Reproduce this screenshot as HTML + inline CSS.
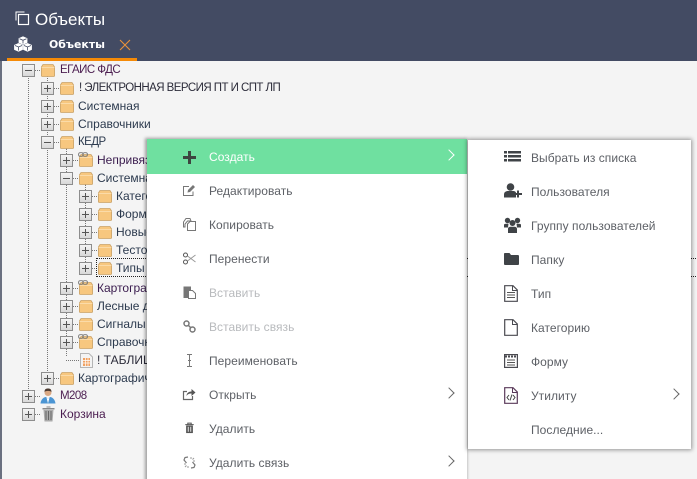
<!DOCTYPE html>
<html lang="ru"><head><meta charset="utf-8"><title>Объекты</title>
<style>
html,body{margin:0;padding:0;width:697px;height:479px;overflow:hidden}
body{font-family:"Liberation Sans",sans-serif}
#w{position:absolute;left:0;top:0;width:697px;height:479px;overflow:hidden;background:#f4f4f4}
#h{position:absolute;left:0;top:0;width:697px;height:61px;background:#434b63}
#lb{position:absolute;left:0;top:61px;width:2px;height:418px;background:#6a7080}
#ul{position:absolute;left:7px;top:58px;width:130px;height:3px;background:#f58a07}
.t{position:absolute;white-space:nowrap}
.tr{line-height:18px;height:18px;color:#2c3a4e;font-family:"Liberation Sans",sans-serif;font-size:12px;margin-top:-1px}
.up{font-size:11.5px;letter-spacing:-.55px}
.b{position:absolute;width:11px;height:11px;border:1px solid #8d8d8d;background:linear-gradient(#f4f4f4,#d8d8d8)}
.b:before{content:"";position:absolute;left:2px;top:5px;width:7px;height:1px;background:#555}
.p:after{content:"";position:absolute;left:5px;top:2px;width:1px;height:7px;background:#555}
.dv{position:absolute;width:0;border-left:1px dotted #777}
.dh{position:absolute;height:0;width:5px;border-top:1px dotted #777}
svg{position:absolute;overflow:visible}
#m1{position:absolute;left:147px;top:139px;width:320px;height:345px;background:#fff;box-shadow:-1px 0 3px 1px rgba(0,0,0,.35)}
#gr{position:absolute;left:0;top:0;width:320px;height:35px;background:#6fe0a0}
#m2{position:absolute;left:468px;top:140px;width:223px;height:309px;background:#fff;box-shadow:0 0 4px 1px rgba(0,0,0,.4)}
.mi{font-size:12px;line-height:16px;height:16px;color:#5d6066;letter-spacing:.05px}
.dis{color:#b8babd}
.ch{position:absolute;width:7px;height:7px;border-top:1px solid #666;border-right:1px solid #666;transform:rotate(45deg)}
</style></head><body><div id="w">
<svg width="0" height="0" style="position:absolute">
<defs>
<symbol id="f" viewBox="0 0 14 14"><path d="M.4 4 L2 1.5 H12 L13.6 4 V12.5 Q13.6 13.5 12.6 13.5 H1.4 Q.4 13.5 .4 12.5Z" fill="#f7c77f" stroke="#c9a36a" stroke-width=".8"/><path d="M.6 4.5 H13.4" stroke="#fbdba8" stroke-width="1"/></symbol>
<symbol id="l" viewBox="0 0 14 6"><path d="M3 .5 H5.5 Q7 .5 7 3 Q7 5.5 5 5.5 H3 Q.8 5.5 .8 3 Q.8 .5 3 .5Z M9 .5 H11 Q13.2 .5 13.2 3 Q13.2 5.5 11 5.5 H9 Q7 5.5 7 3 Q7 .5 9 .5Z" fill="none" stroke="#777" stroke-width="1.3"/></symbol>
</defs></svg>
<div id="h"></div><div id="lb"></div><div id="ul"></div>
<svg style="left:15px;top:11px" width="15" height="15" viewBox="0 0 15 15"><path d="M1 9.5V1H9.5" fill="none" stroke="#fff" stroke-width="1"/><rect x="3.5" y="3.5" width="10" height="10" fill="none" stroke="#fff" stroke-width="1.2"/></svg>
<div class="t" style="left:35px;top:9px;font-size:17px;line-height:22px;color:#fff">Объекты</div>
<svg style="left:14px;top:36px" width="18" height="16" viewBox="0 0 18 16"><g fill="#fff" stroke="#fff" stroke-width=".8" stroke-linejoin="round"><path d="M9 .8 13 2.5V6.5L9 8.3 5 6.5V2.5Z"/><path d="M4.5 7.5 8.5 9.2V13.5L4.5 15.3 .5 13.5V9.2Z"/><path d="M13.5 7.5 17.5 9.2V13.5L13.5 15.3 9.5 13.5V9.2Z"/></g><path d="M5.5 2.8 9 4.3 12.5 2.8M9 4.3V7.5M1 9.5 4.5 11 8 9.5M4.5 11V14.5M10 9.5 13.5 11 17 9.5M13.5 11V14.5" fill="none" stroke="#434b63" stroke-width=".8"/></svg>
<div class="t" style="left:49px;top:37px;line-height:16px;font-weight:bold;color:#fff;font-family:'DejaVu Sans',sans-serif;font-size:10.9px">Объекты</div>
<svg style="left:119px;top:39px" width="12" height="12" viewBox="0 0 12 12"><path d="M1 1 11 11M11 1 1 11" stroke="#e8923a" stroke-width="1.1"/></svg>

<div class="dv" style="left:28px;top:76px;height:315px"></div>
<div class="dv" style="left:47px;top:76px;height:297px"></div>
<div class="dv" style="left:66px;top:148px;height:208px"></div>
<div class="dv" style="left:85px;top:184px;height:78px"></div>
<div class="dh" style="left:35px;top:70px"></div><div class="dh" style="left:54px;top:88px"></div><div class="dh" style="left:54px;top:106px"></div><div class="dh" style="left:54px;top:124px"></div><div class="dh" style="left:54px;top:142px"></div><div class="dh" style="left:73px;top:160px"></div><div class="dh" style="left:73px;top:178px"></div><div class="dh" style="left:92px;top:196px"></div><div class="dh" style="left:92px;top:214px"></div><div class="dh" style="left:92px;top:232px"></div><div class="dh" style="left:92px;top:250px"></div><div class="dh" style="left:92px;top:268px"></div><div class="dh" style="left:73px;top:288px"></div><div class="dh" style="left:73px;top:306px"></div><div class="dh" style="left:73px;top:324px"></div><div class="dh" style="left:73px;top:342px"></div><div class="dh" style="left:66px;top:360px;width:13px"></div><div class="dh" style="left:54px;top:378px"></div><div class="dh" style="left:35px;top:396px"></div><div class="dh" style="left:35px;top:414px"></div>

<div class="b" style="left:22px;top:64px"></div>
<div class="b p" style="left:41px;top:82px"></div>
<div class="b p" style="left:41px;top:100px"></div>
<div class="b p" style="left:41px;top:118px"></div>
<div class="b" style="left:41px;top:136px"></div>
<div class="b p" style="left:60px;top:154px"></div>
<div class="b" style="left:60px;top:172px"></div>
<div class="b p" style="left:79px;top:190px"></div>
<div class="b p" style="left:79px;top:208px"></div>
<div class="b p" style="left:79px;top:226px"></div>
<div class="b p" style="left:79px;top:244px"></div>
<div class="b p" style="left:79px;top:262px"></div>
<div class="b p" style="left:60px;top:282px"></div>
<div class="b p" style="left:60px;top:300px"></div>
<div class="b p" style="left:60px;top:318px"></div>
<div class="b p" style="left:60px;top:336px"></div>
<div class="b p" style="left:41px;top:372px"></div>
<div class="b p" style="left:22px;top:390px"></div>
<div class="b p" style="left:22px;top:408px"></div>

<svg style="left:41px;top:63px" width="14" height="14"><use href="#f"/></svg>
<svg style="left:60px;top:81px" width="14" height="14"><use href="#f"/></svg>
<svg style="left:60px;top:99px" width="14" height="14"><use href="#f"/></svg>
<svg style="left:60px;top:117px" width="14" height="14"><use href="#f"/></svg>
<svg style="left:60px;top:135px" width="14" height="14"><use href="#f"/></svg>
<svg style="left:79px;top:153px" width="14" height="14"><use href="#f"/></svg>
<svg style="left:78px;top:152px" width="10" height="5"><use href="#l" width="10" height="5"/></svg>
<svg style="left:79px;top:171px" width="14" height="14"><use href="#f"/></svg>
<svg style="left:98px;top:189px" width="14" height="14"><use href="#f"/></svg>
<svg style="left:98px;top:207px" width="14" height="14"><use href="#f"/></svg>
<svg style="left:98px;top:225px" width="14" height="14"><use href="#f"/></svg>
<svg style="left:98px;top:243px" width="14" height="14"><use href="#f"/></svg>
<svg style="left:98px;top:261px" width="14" height="14"><use href="#f"/></svg>
<svg style="left:79px;top:281px" width="14" height="14"><use href="#f"/></svg>
<svg style="left:78px;top:280px" width="10" height="5"><use href="#l" width="10" height="5"/></svg>
<svg style="left:79px;top:299px" width="14" height="14"><use href="#f"/></svg>
<svg style="left:79px;top:317px" width="14" height="14"><use href="#f"/></svg>
<svg style="left:79px;top:335px" width="14" height="14"><use href="#f"/></svg>
<svg style="left:78px;top:334px" width="10" height="5"><use href="#l" width="10" height="5"/></svg>
<svg style="left:80px;top:353px" width="13" height="15" viewBox="0 0 13 15"><path d="M.5.5H9L12.5 4V14.5H.5Z" fill="#f3f3f3" stroke="#b5b5b5"/><rect x="3" y="5" width="7" height="8" fill="#f0a060"/><path d="M3 7.5H10M3 10H10M5.5 5V13M8 5V13" stroke="#fff" stroke-width=".7"/></svg>
<svg style="left:60px;top:371px" width="14" height="14"><use href="#f"/></svg>
<svg style="left:40px;top:388px" width="16" height="16" viewBox="0 0 16 16"><circle cx="8" cy="4.5" r="3.5" fill="#d9a883"/><path d="M4.5 4C4.5 1 6 .5 8 .5S11.5 1 11.5 4C10 2.5 6 2.5 4.5 4Z" fill="#4b3a30"/><path d="M.5 15.5C1 11 4 9 6 9L8 11 10 9C12 9 15 11 15.5 15.5Z" fill="#4b95d3"/><path d="M6.5 9.5 8 15.5 9.5 9.5 8 11Z" fill="#fff"/></svg>
<svg style="left:42px;top:406px" width="13" height="16" viewBox="0 0 13 16"><path d="M4.5 1.5H8.5V.5H4.5ZM.5 2H12.5V3.5H.5Z" fill="#888"/><path d="M1.5 4H11.5L10.5 15.5H2.5Z" fill="#aaa"/><path d="M4 5V14M6.5 5V14M9 5V14" stroke="#666" stroke-width="1"/></svg>

<div class="t tr up" style="left:60px;top:62px;color:#4b1d50">ЕГАИС ФДС</div>
<div class="t tr up" style="left:79px;top:80px;color:#2c2c3a">! ЭЛЕКТРОННАЯ ВЕРСИЯ ПТ И СПТ ЛП</div>
<div class="t tr" style="left:78px;top:98px">Системная</div>
<div class="t tr" style="left:78px;top:116px">Справочники</div>
<div class="t tr up" style="left:78px;top:134px">КЕДР</div>
<div class="t tr" style="left:97px;top:152px;color:#3a1c4e">Непривязанные</div>
<div class="t tr" style="left:97px;top:170px">Системная</div>
<div class="t tr" style="left:116px;top:188px">Категории</div>
<div class="t tr" style="left:116px;top:206px">Формы</div>
<div class="t tr" style="left:116px;top:224px">Новые</div>
<div class="t tr" style="left:116px;top:242px">Тестовые</div>
<div class="t tr" style="left:116px;top:260px">Типы</div>
<div style="position:absolute;left:96px;top:258px;width:600px;height:17px;border:1px dotted #222"></div>
<div class="t tr" style="left:97px;top:280px;color:#3a1c4e">Картография</div>
<div class="t tr" style="left:97px;top:298px">Лесные дачи</div>
<div class="t tr" style="left:97px;top:316px">Сигналы</div>
<div class="t tr" style="left:97px;top:334px">Справочники</div>
<div class="t tr" style="left:97px;top:352px;color:#2c2c3a">! ТАБЛИЦА</div>
<div class="t tr" style="left:78px;top:370px">Картографические</div>
<div class="t tr up" style="left:60px;top:388px;color:#4b1d50">М208</div>
<div class="t tr" style="left:60px;top:406px;color:#4b1d50">Корзина</div>

<div id="m1"><div id="gr"></div></div>
<svg style="left:183px;top:151px" width="13" height="13" viewBox="0 0 13 13"><path d="M5 0H8V5H13V8H8V13H5V8H0V5H5Z" fill="#3d4540"/></svg>
<div class="t mi" style="left:209px;top:149px;color:#fff">Создать</div>
<div class="ch" style="left:445px;top:151px;border-color:#fff"></div>
<svg style="left:183px;top:184px" width="13" height="13" viewBox="0 0 13 13"><path d="M10 7.5V11.5H.5V2.5H6" fill="none" stroke="#777" stroke-width="1"/><path d="M4.5 8.5 5 6 10 1 12 3 7 8Z" fill="#777"/></svg>
<div class="t mi" style="left:209px;top:183px">Редактировать</div>
<svg style="left:183px;top:218px" width="13" height="13" viewBox="0 0 13 13"><path d="M3 .5H7L8 3H4.5L2 6V9H.5V4Z" fill="none" stroke="#777"/><path d="M7 3.5H12.5V12.5H4.5V6Z" fill="none" stroke="#777"/></svg>
<div class="t mi" style="left:209px;top:217px">Копировать</div>
<svg style="left:183px;top:252px" width="13" height="13" viewBox="0 0 13 13"><circle cx="2.5" cy="3" r="2" fill="none" stroke="#555"/><circle cx="2.5" cy="10" r="2" fill="none" stroke="#555"/><path d="M4.5 4 12.5 10M4.5 9 12.5 3" stroke="#999"/></svg>
<div class="t mi" style="left:209px;top:251px">Перенести</div>
<svg style="left:183px;top:286px" width="13" height="13" viewBox="0 0 13 13"><path d="M.5 .5H8V4H5V12H.5Z" fill="#777"/><path d="M5.5 4.5H9.5L12.5 7.5V12.5H5.5Z" fill="#fff" stroke="#777"/></svg>
<div class="t mi dis" style="left:209px;top:285px">Вставить</div>
<svg style="left:183px;top:320px" width="13" height="13" viewBox="0 0 13 13"><circle cx="3.5" cy="3.5" r="2.5" fill="none" stroke="#777" stroke-width="1.5"/><circle cx="9.5" cy="9.5" r="2.5" fill="none" stroke="#777" stroke-width="1.5"/><path d="M5 5 8 8" stroke="#777" stroke-width="1.5"/></svg>
<div class="t mi dis" style="left:209px;top:319px">Вставить связь</div>
<svg style="left:183px;top:354px" width="13" height="13" viewBox="0 0 13 13"><path d="M4 .5H6L6.5 1 7 .5H9M4 12.5H6L6.5 12 7 12.5H9M6.5 1V12M5 6.5H8" fill="none" stroke="#777"/></svg>
<div class="t mi" style="left:209px;top:353px">Переименовать</div>
<svg style="left:183px;top:388px" width="13" height="13" viewBox="0 0 13 13"><path d="M9.5 8V11.5H.5V3.5H4" fill="none" stroke="#666" stroke-width="1.2"/><path d="M3.5 8C3.5 5 6 3.5 8.5 3.5V1L12.5 4.5 8.5 8V5.5C6.5 5.5 4.5 6 3.5 8Z" fill="#555"/></svg>
<div class="t mi" style="left:209px;top:387px">Открыть</div>
<div class="ch" style="left:445px;top:389px"></div>
<svg style="left:184px;top:422px" width="11" height="12" viewBox="0 0 13 13"><path d="M4.5 2V.8H8.5V2M1.5 2.5H11.5" fill="none" stroke="#555" stroke-width="1.2"/><path d="M2.5 3.5H10.5V12.5H2.5Z" fill="#555"/><path d="M5 5V11M8 5V11" stroke="#fff"/></svg>
<div class="t mi" style="left:209px;top:421px">Удалить</div>
<svg style="left:183px;top:456px" width="13" height="13" viewBox="0 0 13 13"><path d="M5 1 2 1.5 1 4 3.5 7M8 12 11 11.5 12 9 9.5 6" fill="none" stroke="#777" stroke-width="1.2"/><path d="M8 1V3M11 2 9.5 3.5M12 5H10M1 8H3M2 11 3.5 9.5M5 10V12" stroke="#999"/></svg>
<div class="t mi" style="left:209px;top:455px">Удалить связь</div>
<div class="ch" style="left:445px;top:457px"></div>

<div id="m2"></div>
<svg style="left:504px;top:150px" width="17" height="14" viewBox="0 0 17 14"><path d="M0 1H3V3.5H0ZM4 1H17V3.5H4ZM0 5H3V7.5H0ZM4 5H17V7.5H4ZM0 9H3V11.5H0ZM4 9H17V11.5H4Z" fill="#3f4347"/></svg>
<div class="t mi" style="left:531px;top:150px">Выбрать из списка</div>
<svg style="left:504px;top:183px" width="18" height="15" viewBox="0 0 18 15"><circle cx="6.5" cy="4" r="3.8" fill="#3f4347"/><path d="M0 14.5V11.5C0 9 2 8 4 8H9C11 8 12 9 12 10V14.5Z" fill="#3f4347"/><path d="M14 7.5V14.5M10.5 11H18" stroke="#3f4347" stroke-width="2"/></svg>
<div class="t mi" style="left:531px;top:184px">Пользователя</div>
<svg style="left:504px;top:217px" width="17" height="16" viewBox="0 0 17 16"><circle cx="3.5" cy="3.5" r="2.7" fill="#3f4347"/><circle cx="13.5" cy="3.5" r="2.7" fill="#3f4347"/><circle cx="8.5" cy="6" r="3" fill="#3f4347"/><path d="M0 10.5V8C0 7 1 6.7 2 6.7H4.5L4 10.5Z M17 10.5V8C17 7 16 6.7 15 6.7H12.5L13 10.5Z M4 16V12C4 10.5 5 9.7 6.5 9.7H10.5C12 9.7 13 10.5 13 12V16Z" fill="#3f4347"/></svg>
<div class="t mi" style="left:531px;top:218px">Группу пользователей</div>
<svg style="left:504px;top:252px" width="15" height="14" viewBox="0 0 15 14"><path d="M0 2C0 1.2.5 1 1 1H5.5L7 3H14C14.5 3 15 3.5 15 4V12C15 12.5 14.5 13 14 13H1C.5 13 0 12.5 0 12Z" fill="#3f4347"/></svg>
<div class="t mi" style="left:531px;top:252px">Папку</div>
<svg style="left:504px;top:285px" width="14" height="17" viewBox="0 0 14 17"><path d="M.7.7H9L13.3 5V16.3H.7Z" fill="#fff" stroke="#4a4a50" stroke-width="1.2"/><path d="M8.5.7V5.5H13.3" fill="none" stroke="#4a4a50"/><path d="M3 7.5H11M3 10H11M3 12.5H11" stroke="#555"/></svg>
<div class="t mi" style="left:531px;top:286px">Тип</div>
<svg style="left:504px;top:319px" width="14" height="17" viewBox="0 0 14 17"><path d="M.7.7H9L13.3 5V16.3H.7Z" fill="#fff" stroke="#4a4a50" stroke-width="1.2"/><path d="M8.5.7V5.5H13.3" fill="none" stroke="#4a4a50"/></svg>
<div class="t mi" style="left:531px;top:320px">Категорию</div>
<svg style="left:504px;top:354px" width="14" height="14" viewBox="0 0 14 14"><rect x=".6" y=".6" width="12.8" height="12.8" fill="#fff" stroke="#4a4a50" stroke-width="1.2"/><path d="M1 2.5H13" stroke="#4a4a50" stroke-width="2" stroke-dasharray="2 1"/><path d="M3 6H11M3 8.5H11M3 11H11" stroke="#555"/></svg>
<div class="t mi" style="left:531px;top:354px">Форму</div>
<svg style="left:504px;top:387px" width="14" height="17" viewBox="0 0 14 17"><path d="M.7.7H9L13.3 5V16.3H.7Z" fill="#fff" stroke="#5a3a5a" stroke-width="1.2"/><path d="M8.5.7V5.5H13.3" fill="none" stroke="#5a3a5a"/><path d="M5 8 3 10.5 5 13M9 8 11 10.5 9 13M8 7.5 6 13.5" fill="none" stroke="#444"/></svg>
<div class="t mi" style="left:531px;top:388px">Утилиту</div>
<div class="ch" style="left:670px;top:390px"></div>
<div class="t mi" style="left:531px;top:422px">Последние...</div>
</div></body></html>
